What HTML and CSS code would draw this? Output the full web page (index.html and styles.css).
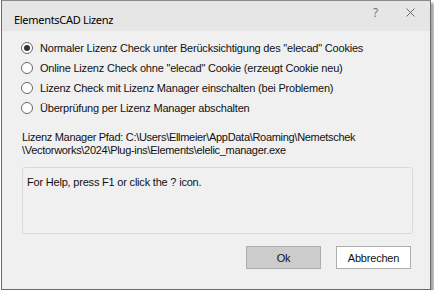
FILE: index.html
```html
<!DOCTYPE html>
<html lang="de">
<head>
  <meta charset="UTF-8">
  <title>ElementsCAD Lizenz</title>
  <link rel="stylesheet" href="styles.css">
</head>
<body>
<div class="window">
  <!-- Titelleiste -->
  <div class="titlebar">
    <span class="title">ElementsCAD Lizenz</span>
    <span class="tb-btn help">?</span>
    <span class="tb-btn close">
      <svg width="9" height="9" viewBox="0 0 9 9"><path d="M0.5 0.5 L8.5 8.5 M8.5 0.5 L0.5 8.5" stroke="#6a6a6a" stroke-width="1" fill="none"/></svg>
    </span>
  </div>

  <div class="content">
    <div class="options">
      <label class="radio"><span class="dot checked"></span>Normaler Lizenz Check unter Berücksichtigung des "elecad" Cookies</label>
      <label class="radio"><span class="dot"></span>Online Lizenz Check ohne "elecad" Cookie (erzeugt Cookie neu)</label>
      <label class="radio"><span class="dot"></span>Lizenz Check mit Lizenz Manager einschalten (bei Problemen)</label>
      <label class="radio"><span class="dot"></span>Überprüfung per Lizenz Manager abschalten</label>
    </div>

    <p class="path">Lizenz Manager Pfad: C:\Users\Ellmeier\AppData\Roaming\Nemetschek<br>\Vectorworks\2024\Plug-ins\Elements\elelic_manager.exe</p>

    <div class="helpbox">For Help, press F1 or click the ? icon.</div>

    <div class="buttons">
      <button class="btn btn-ok">Ok</button>
      <button class="btn">Abbrechen</button>
    </div>
  </div>
</div>
</body>
</html>
```

FILE: styles.css
```css
* {
  margin: 0;
  padding: 0;
  box-sizing: border-box;
}

body {
  background: #ffffff;
  font-family: "Liberation Sans", Arial, sans-serif;
  font-size: 11px;
  letter-spacing: -0.2px;
  color: #111;
}

.window {
  margin-left: 1px;
  width: 430px;
  height: 290px;
  border: 1px solid #6b6b6b;
  border-top-color: #8a8a8a;
  background: #f0f0f0;
  box-shadow: 3px 3px 2px rgba(0,0,0,0.35);
  display: flex;
  flex-direction: column;
}

/* Titelleiste */
.titlebar {
  height: 30px;
  background: #e6e6e6;
  display: flex;
  align-items: center;
  padding-left: 12px;
}

.title {
  font-family: "Noto Sans", "Open Sans", sans-serif;
  font-size: 11px;
  letter-spacing: -0.3px;
  color: #000;
  flex: 1;
  margin-top: 7px;
}

.tb-btn {
  width: 35px;
  text-align: center;
  color: #777;
  margin-top: -8px;
}

.help {
  font-family: "Noto Sans", sans-serif;
  font-size: 12px;
}

.close {
  margin-right: 2px;
  display: flex;
  justify-content: center;
}

.content {
  padding: 10px 17px 0 20px;
  flex: 1;
  display: flex;
  flex-direction: column;
}

.options {
  display: flex;
  flex-direction: column;
  gap: 6px;
}

.radio {
  display: flex;
  align-items: center;
  height: 14px;
}

.dot {
  width: 12px;
  height: 12px;
  border: 1px solid #666;
  border-radius: 50%;
  background: #fff;
  margin-left: -1px;
  margin-right: 7px;
  display: flex;
  justify-content: center;
  align-items: center;
}

.dot.checked::after {
  content: "";
  width: 6px;
  height: 6px;
  border-radius: 50%;
  background: #333;
}

.path {
  margin-top: 16px;
  line-height: 13px;
  letter-spacing: -0.3px;
}

.helpbox {
  margin-top: 10px;
  height: 67px;
  width: 391px;
  border: 1px solid #d9d9d9;
  border-radius: 3px;
  padding: 8px 4px;
}

.buttons {
  display: flex;
  justify-content: flex-end;
  gap: 15px;
  margin-top: 12px;
  padding-right: 2px;
}

.btn {
  width: 75px;
  height: 23px;
  border: 1px solid #adadad;
  background: #fff;
  font-family: "Liberation Sans", Arial, sans-serif;
  font-size: 11px;
  letter-spacing: -0.2px;
  color: #111;
}

.btn-ok {
  background: #cccccc;
  border-color: #adadad;
}
```
